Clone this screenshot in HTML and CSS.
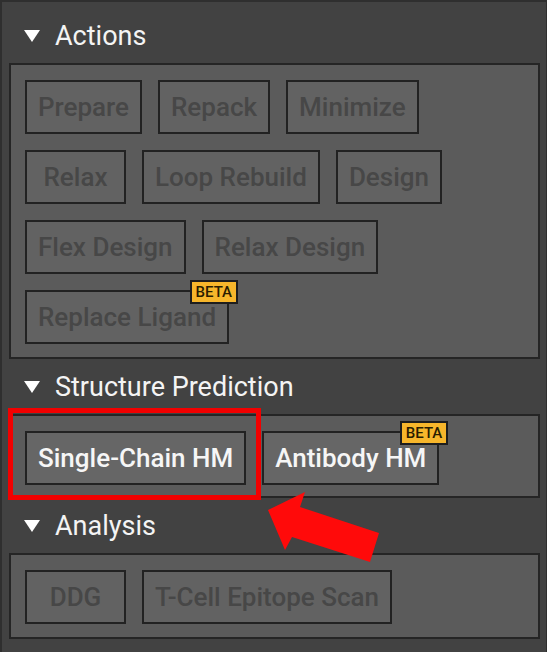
FILE: index.html
```html
<!DOCTYPE html>
<html lang="en">
<head>
    <meta charset="UTF-8">
    <meta name="viewport" content="width=device-width, initial-scale=1.0">
    <title>Protocols</title>
    <link rel="stylesheet" href="styles.css">
</head>
<body>
    <div class="sidebar">
        <div class="section-head">
            <svg class="caret" width="16" height="12" viewBox="0 0 16 12"><polygon points="0,0 16,0 8,12" fill="#ffffff"/></svg>
            <span>Actions</span>
        </div>
        <div class="panel">
            <div class="btn-row">
                <button class="btn" disabled>Prepare</button>
                <button class="btn" disabled>Repack</button>
                <button class="btn" disabled>Minimize</button>
            </div>
            <div class="btn-row">
                <button class="btn" disabled>Relax</button>
                <button class="btn" disabled>Loop Rebuild</button>
                <button class="btn" disabled>Design</button>
            </div>
            <div class="btn-row">
                <button class="btn" disabled>Flex Design</button>
                <button class="btn" disabled>Relax Design</button>
            </div>
            <div class="btn-row">
                <button class="btn" disabled>Replace Ligand<span class="beta">BETA</span></button>
            </div>
        </div>

        <div class="section-head">
            <svg class="caret" width="16" height="12" viewBox="0 0 16 12"><polygon points="0,0 16,0 8,12" fill="#ffffff"/></svg>
            <span>Structure Prediction</span>
        </div>
        <div class="panel panel-marked">
            <div class="btn-row">
                <button class="btn active">Single-Chain HM</button>
                <button class="btn active">Antibody HM<span class="beta">BETA</span></button>
            </div>
            <div class="highlight"></div>
        </div>

        <div class="section-head">
            <svg class="caret" width="16" height="12" viewBox="0 0 16 12"><polygon points="0,0 16,0 8,12" fill="#ffffff"/></svg>
            <span>Analysis</span>
        </div>
        <div class="panel">
            <div class="btn-row">
                <button class="btn" disabled>DDG</button>
                <button class="btn" disabled>T-Cell Epitope Scan</button>
            </div>
        </div>
    </div>

    <svg class="arrow" width="547" height="652" viewBox="0 0 547 652">
        <polygon points="268,510 305,492 300,507 379,533 370,562 292,537 285,550" fill="#ff0a0a"/>
    </svg>
</body>
</html>
```

FILE: styles.css
```css
body {
    margin: 0;
    padding: 0;
    background-color: #424242;
    font-family: Roboto, "Liberation Sans", sans-serif;
    position: relative;
}
.sidebar {
    width: 547px;
    min-height: 652px;
    box-sizing: border-box;
    padding: 6px 6px 0 7px;
    border-top: 2px solid #2f2f2f;
    border-left: 2px solid #2f2f2f;
    border-right: 1px solid #2f2f2f;
}
.section-head {
    height: 55px;
    display: flex;
    align-items: center;
    padding-left: 15px;
    color: #f4f4f4;
    font-size: 27px;
}
.caret {
    margin-right: 15px;
    margin-top: 1px;
}
.panel {
    background-color: #5b5b5b;
    border: 2px solid #252525;
    padding: 15px 14px 13px 14px;
    display: flex;
    flex-direction: column;
    gap: 16px;
}
.panel-marked {
    position: relative;
    padding-bottom: 11px;
}
.btn-row {
    display: flex;
    gap: 16px;
}
.btn {
    position: relative;
    height: 54px;
    min-width: 101px;
    padding: 0 11px;
    background-color: #626262;
    border: 2px solid #222222;
    border-radius: 0;
    font-family: Roboto, "Liberation Sans", sans-serif;
    font-size: 26px;
    font-weight: 500;
    color: #474747;
    white-space: nowrap;
}
.btn.active {
    color: #f6f6f6;
    background-color: #666666;
}
.beta {
    position: absolute;
    top: -12px;
    right: -11px;
    background-color: #f7b62b;
    border: 2px solid #1e1e1e;
    color: #2a1d00;
    font-size: 15px;
    font-weight: 500;
    line-height: 20px;
    padding: 0 4px;
}
.highlight {
    position: absolute;
    left: -3px;
    top: -8px;
    width: 243px;
    height: 82px;
    border: 5px solid #f20000;
}
.arrow {
    position: absolute;
    left: 0;
    top: 0;
    pointer-events: none;
}
```
